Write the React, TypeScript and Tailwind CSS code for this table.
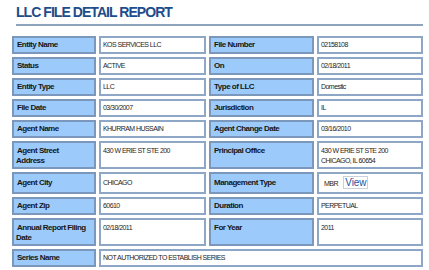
import clsx from 'clsx';

type Row = {
  l1: React.ReactNode;
  v1: React.ReactNode;
  l2: string;
  v2: React.ReactNode;
  tall?: boolean;
  mid?: boolean;
};

const rows: Row[] = [
  { l1: 'Entity Name', v1: 'KOS SERVICES LLC', l2: 'File Number', v2: '02158108' },
  { l1: 'Status', v1: 'ACTIVE', l2: 'On', v2: '02/18/2011' },
  { l1: 'Entity Type', v1: 'LLC', l2: 'Type of LLC', v2: 'Domestic' },
  { l1: 'File Date', v1: '03/30/2007', l2: 'Jurisdiction', v2: 'IL' },
  { l1: 'Agent Name', v1: 'KHURRAM HUSSAIN', l2: 'Agent Change Date', v2: '03/16/2010' },
  {
    l1: (
      <>
        Agent Street
        <br />
        Address
      </>
    ),
    v1: '430 W ERIE ST STE 200',
    l2: 'Principal Office',
    v2: (
      <>
        430 W ERIE ST STE 200
        <br />
        CHICAGO, IL 60654
      </>
    ),
    tall: true,
  },
  {
    l1: 'Agent City',
    v1: 'CHICAGO',
    l2: 'Management Type',
    v2: (
      <span className="indent-[3px]">
        MBR{' '}
        <a className="ml-[4px] border border-[#c9d1dd] px-[1px] text-[10px] tracking-[-0.1px] text-[#1f4f9c]">
          View
        </a>
      </span>
    ),
    mid: true,
  },
  { l1: 'Agent Zip', v1: '60610', l2: 'Duration', v2: 'PERPETUAL' },
  {
    l1: (
      <>
        Annual Report Filing
        <br />
        Date
      </>
    ),
    v1: '02/18/2011',
    l2: 'For Year',
    v2: '2011',
    tall: true,
  },
];

function Label({ children, tall, mid }: { children: React.ReactNode; tall?: boolean; mid?: boolean }) {
  return (
    <div
      className={clsx(
        'border-2 border-[#7b98bc] bg-[#9ccbfb] pl-[2px] indent-[1px] text-[8px] font-bold leading-[9.5px] tracking-[-0.5px] text-[#161616]',
        tall ? 'h-[28px] pt-[3px]' : mid ? 'flex h-[22px] items-center' : 'flex h-[18px] items-center',
      )}
    >
      {children}
    </div>
  );
}

function Value({ children, tall, mid, className }: { children: React.ReactNode; tall?: boolean; mid?: boolean; className?: string }) {
  return (
    <div
      className={clsx(
        'border-2 border-[#8ea7c6] bg-white pl-[2px] text-[7px] leading-[9.5px] tracking-[-0.55px] text-[#1e1e1e]',
        tall ? 'h-[28px] pt-[3px]' : mid ? 'flex h-[22px] items-center' : 'flex h-[18px] items-center',
        className,
      )}
    >
      {children}
    </div>
  );
}

export default function App() {
  return (
    <div className="h-[270px] w-[429px] overflow-hidden bg-white font-['Liberation_Sans',Arial,sans-serif]">
      <div className="px-[16px] pt-[4px]">
        <h1 className="text-[14px] font-bold leading-[16px] tracking-[-0.95px] text-[#1d4d8b]">LLC FILE DETAIL REPORT</h1>
        <div className="mr-[-10px] mt-[4px] border-t-2 border-[#8ea3bc]" />
      </div>

      <div className="ml-[12px] mt-[10px] grid w-[411px] grid-cols-[84px_107px_105px_106px] gap-[3px]">
        {rows.map((r, i) => (
          <div key={i} className="contents">
            <Label tall={r.tall} mid={r.mid}>{r.l1}</Label>
            <Value tall={r.tall} mid={r.mid}>{r.v1}</Value>
            <Label tall={r.tall} mid={r.mid}>{r.l2}</Label>
            <Value tall={r.tall} mid={r.mid}>{r.v2}</Value>
          </div>
        ))}
        <Label>Series Name</Label>
        <Value className="col-span-3">NOT AUTHORIZED TO ESTABLISH SERIES</Value>
      </div>
    </div>
  );
}
